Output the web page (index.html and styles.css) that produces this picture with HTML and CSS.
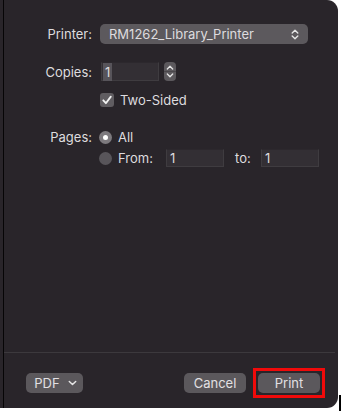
FILE: index.html
```html
<!DOCTYPE html>
<html lang="en">
  <head>
    <meta charset="UTF-8" />
    <meta name="viewport" content="width=device-width, initial-scale=1.0" />
    <link rel="stylesheet" href="styles.css">
    <title>Print</title>
  </head>
  <body>
    <div class="frame">
      <div class="sheet">
        <div class="form">
          <div class="row row-printer">
            <span class="label">Printer:</span>
            <div class="select">
              <span>RM1262_Library_Printer</span>
              <svg class="updown" width="8" height="11" viewBox="0 0 8 11">
                <path d="M1.2 4 L4 1.3 L6.8 4 M1.2 7 L4 9.7 L6.8 7" fill="none" stroke="#e6e6e6" stroke-width="1.4" stroke-linecap="round" stroke-linejoin="round"/>
              </svg>
            </div>
          </div>

          <div class="row row-copies">
            <span class="label">Copies:</span>
            <div class="field field-copies"><span class="sel">1</span></div>
            <div class="stepper">
              <svg width="12" height="19" viewBox="0 0 12 19">
                <path d="M3.3 7 L6 4.3 L8.7 7 M3.3 12 L6 14.7 L8.7 12" fill="none" stroke="#e6e6e6" stroke-width="1.3" stroke-linecap="round" stroke-linejoin="round"/>
                <line x1="0" y1="9.5" x2="12" y2="9.5" stroke="#4a474b" stroke-width="1"/>
              </svg>
            </div>
          </div>

          <div class="row row-duplex">
            <span class="check">
              <svg width="14" height="14" viewBox="0 0 14 14">
                <path d="M3.3 7.3 L5.9 10.2 L10.8 3.6" fill="none" stroke="#f2f2f2" stroke-width="1.8" stroke-linecap="round" stroke-linejoin="round"/>
              </svg>
            </span>
            <span class="text">Two-Sided</span>
          </div>

          <div class="row row-pages">
            <span class="label">Pages:</span>
            <span class="radio on"></span>
            <span class="text">All</span>
          </div>

          <div class="row row-range">
            <span class="radio"></span>
            <span class="text from">From:</span>
            <div class="field field-range">1</div>
            <span class="text to">to:</span>
            <div class="field field-range">1</div>
          </div>
        </div>

        <div class="footer">
          <button class="btn btn-pdf">PDF
            <svg width="9" height="6" viewBox="0 0 9 6">
              <path d="M1.3 1.5 L4.5 4.5 L7.7 1.5" fill="none" stroke="#e6e6e6" stroke-width="1.5" stroke-linecap="round" stroke-linejoin="round"/>
            </svg>
          </button>
          <div class="actions">
            <button class="btn btn-cancel">Cancel</button>
            <span class="focus"><button class="btn btn-print">Print</button></span>
          </div>
        </div>
      </div>
    </div>
    <div class="mark"></div>
  </body>
</html>
```

FILE: styles.css
```css
body {
  margin: 0;
  width: 342px;
  height: 411px;
  background-color: #fff;
  font-family: Inter, "Liberation Sans", sans-serif;
  font-size: 13px;
  color: #dedcdf;
  position: relative;
  overflow: hidden;
}
.frame {
  width: 335px;
  height: 408px;
  padding-left: 3px;
  background-color: #29252a;
  border-radius: 0 11px 11px 0;
}
.sheet {
  height: 100%;
  border-left: 1px solid #060506;
  display: flex;
  flex-direction: column;
}
.form {
  flex: 1;
}
.row {
  display: flex;
  align-items: center;
}
.label {
  width: 88px;
  padding-right: 8px;
  text-align: right;
}
.row-printer {
  margin-top: 24px;
  height: 20px;
}
.select {
  width: 190px;
  height: 20px;
  padding: 0 9px;
  border-radius: 5px;
  background-color: #5c595d;
  display: flex;
  align-items: center;
  justify-content: space-between;
}
.row-copies {
  margin-top: 18px;
  height: 19px;
}
.field {
  height: 18px;
  box-sizing: border-box;
  background-color: #332f34;
  border: 1px solid #3f3c40;
  border-top-color: #2c282d;
  padding-left: 3px;
  display: flex;
  align-items: center;
}
.field-copies {
  width: 58px;
  height: 19px;
  margin-left: 1px;
  padding-left: 1px;
}
.sel {
  background-color: #57545a;
  padding: 1px 2px;
}
.stepper {
  width: 12px;
  height: 19px;
  margin-left: 5px;
  border-radius: 4px;
  background-color: #5c595d;
  overflow: hidden;
}
.stepper svg {
  display: block;
}
.row-duplex {
  margin-top: 12px;
  height: 14px;
  padding-left: 96px;
}
.check {
  width: 14px;
  height: 14px;
  border-radius: 3px;
  background-color: #605d61;
}
.check svg {
  display: block;
}
.text {
  margin-left: 6px;
}
.row-pages {
  margin-top: 23px;
  height: 14px;
}
.radio {
  width: 13px;
  height: 13px;
  margin-left: -1px;
  border-radius: 50%;
  background-color: #58555a;
  box-sizing: border-box;
  position: relative;
}
.radio.on {
  background-color: #7d7a7e;
}
.radio.on::after {
  content: "";
  position: absolute;
  left: 4px;
  top: 4px;
  width: 5px;
  height: 5px;
  border-radius: 50%;
  background-color: #fff;
}
.row-range {
  margin-top: 5px;
  height: 18px;
  padding-left: 96px;
}
.from {
  width: 48px;
}
.field-range {
  width: 58px;
}
.to {
  margin-left: 11px;
  width: 26px;
}
.footer {
  height: 56px;
  border-top: 1px solid #3c393d;
  margin-right: 3px;
  padding: 15px 10px 0 22px;
  box-sizing: border-box;
  display: flex;
  justify-content: space-between;
  align-items: center;
  align-content: flex-start;
}
.footer > .btn-pdf {
  align-self: flex-start;
  margin-top: 5px;
}
.actions {
  display: flex;
  align-items: center;
  gap: 7px;
  align-self: flex-start;
}
.focus {
  display: block;
  padding: 2px;
  border: 3px solid #f00a0a;
}
.btn {
  height: 20px;
  border: none;
  border-radius: 5px;
  background-color: #5b585c;
  color: #e2e0e3;
  font-family: Inter, "Liberation Sans", sans-serif;
  font-size: 13px;
  padding: 0;
  display: flex;
  align-items: center;
  justify-content: center;
}
.btn-pdf {
  width: 57px;
  gap: 8px;
  padding-left: 2px;
}
.btn-cancel,
.btn-print {
  width: 62px;
}
.mark {
  position: absolute;
  left: 339px;
  top: 395px;
  width: 2px;
  height: 16px;
  background-color: #000;
}
```
